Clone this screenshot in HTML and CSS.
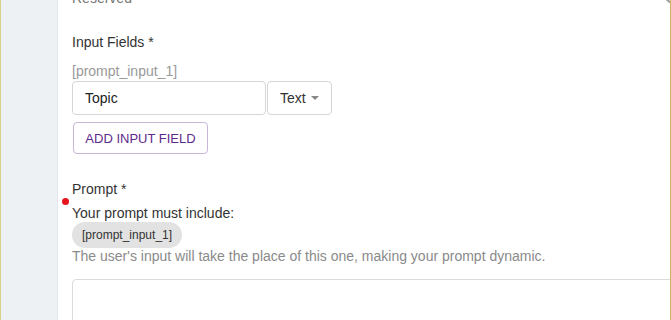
FILE: index.html
```html
<!DOCTYPE html>
<html lang="en">
<head>
    <meta charset="UTF-8">
    <meta name="viewport" content="width=device-width, initial-scale=1.0">
    <title>Prompt Builder</title>
    <link rel="stylesheet" href="styles.css">
</head>
<body>
    <div class="page">
        <aside class="rail"></aside>

        <main class="editor">
            <div class="reserved-row">
                <span class="reserved">Reserved</span>
                <span class="radio"></span>
            </div>

            <div class="field-label fields-label">Input Fields *</div>
            <div class="var-name">[prompt_input_1]</div>
            <div class="input-row">
                <input type="text" class="text-input" value="Topic">
                <div class="type-select">
                    <span>Text</span>
                    <span class="caret"></span>
                </div>
            </div>
            <button type="button" class="add-btn">ADD INPUT FIELD</button>

            <div class="prompt-block">
                <span class="required-dot"></span>
                <div class="field-label">Prompt *</div>
                <div class="must-include">Your prompt must include:</div>
                <span class="chip">[prompt_input_1]</span>
                <p class="hint">The user's input will take the place of this one, making your prompt dynamic.</p>
                <textarea class="prompt-area"></textarea>
            </div>
        </main>
    </div>
</body>
</html>
```

FILE: styles.css
```css
* {
    margin: 0;
    padding: 0;
    box-sizing: border-box;
}

html, body {
    width: 671px;
    height: 320px;
    overflow: hidden;
}

body {
    font-family: 'Liberation Sans', Arial, sans-serif;
    background: #ffffff;
    color: #333;
}

.page {
    display: flex;
    height: 320px;
    border-left: 1px solid #d8d18c;
    border-right: 1px solid #c9b65e;
}

.rail {
    width: 57px;
    flex-shrink: 0;
    background: #edf1f4;
    border-right: 1px solid #e4e8eb;
}

.editor {
    flex: 1;
    overflow: hidden;
    padding-left: 14px;
}

.reserved-row {
    display: flex;
    justify-content: space-between;
    align-items: flex-end;
    height: 18px;
    margin-top: -11px;
}

.reserved {
    font-size: 14px;
    line-height: 18px;
    color: #777;
}

.radio {
    width: 20px;
    height: 20px;
    border: 2px solid #9a9a9a;
    border-radius: 50%;
    margin-right: -14px;
    margin-bottom: 3px;
}

.field-label {
    font-size: 14px;
    line-height: 18px;
    color: #333;
}

.fields-label {
    margin-top: 26px;
}

.var-name {
    margin-top: 12px;
    font-size: 14px;
    line-height: 17px;
    color: #9a9a9a;
}

.input-row {
    display: flex;
    gap: 1px;
    margin-top: 1px;
}

.text-input {
    width: 194px;
    height: 34px;
    padding: 0 12px;
    border: 1px solid #d6d6d6;
    border-radius: 4px;
    font-family: inherit;
    font-size: 14px;
    color: #222;
    outline: none;
}

.type-select {
    width: 65px;
    height: 34px;
    padding: 0 12px;
    border: 1px solid #d6d6d6;
    border-radius: 4px;
    display: flex;
    align-items: center;
    justify-content: space-between;
    font-size: 14px;
    color: #333;
}

.caret {
    width: 0;
    height: 0;
    border-left: 4px solid transparent;
    border-right: 4px solid transparent;
    border-top: 4px solid #888;
}

.add-btn {
    display: block;
    margin-top: 7px;
    margin-left: 1px;
    width: 135px;
    height: 32px;
    background: #fff;
    border: 1px solid #c9b6d9;
    border-radius: 4px;
    font-family: inherit;
    font-size: 13px;
    color: #5e2a8a;
    cursor: pointer;
}

.prompt-block {
    position: relative;
    display: flex;
    flex-direction: column;
    align-items: flex-start;
    margin-top: 26px;
}

.required-dot {
    position: absolute;
    left: -10px;
    top: 18px;
    width: 7px;
    height: 7px;
    border-radius: 50%;
    background: #e8141b;
}

.must-include {
    margin-top: 6px;
    font-size: 14px;
    line-height: 18px;
    color: #333;
}

.chip {
    height: 26px;
    line-height: 26px;
    padding: 0 10px;
    border-radius: 13px;
    background: #e2e2e2;
    font-size: 12px;
    color: #333;
}

.hint {
    font-size: 14px;
    line-height: 17px;
    color: #8a8a8a;
}

.prompt-area {
    display: block;
    margin-top: 14px;
    width: 640px;
    height: 80px;
    border: 1px solid #dcdcdc;
    border-radius: 4px;
    resize: none;
}
```
